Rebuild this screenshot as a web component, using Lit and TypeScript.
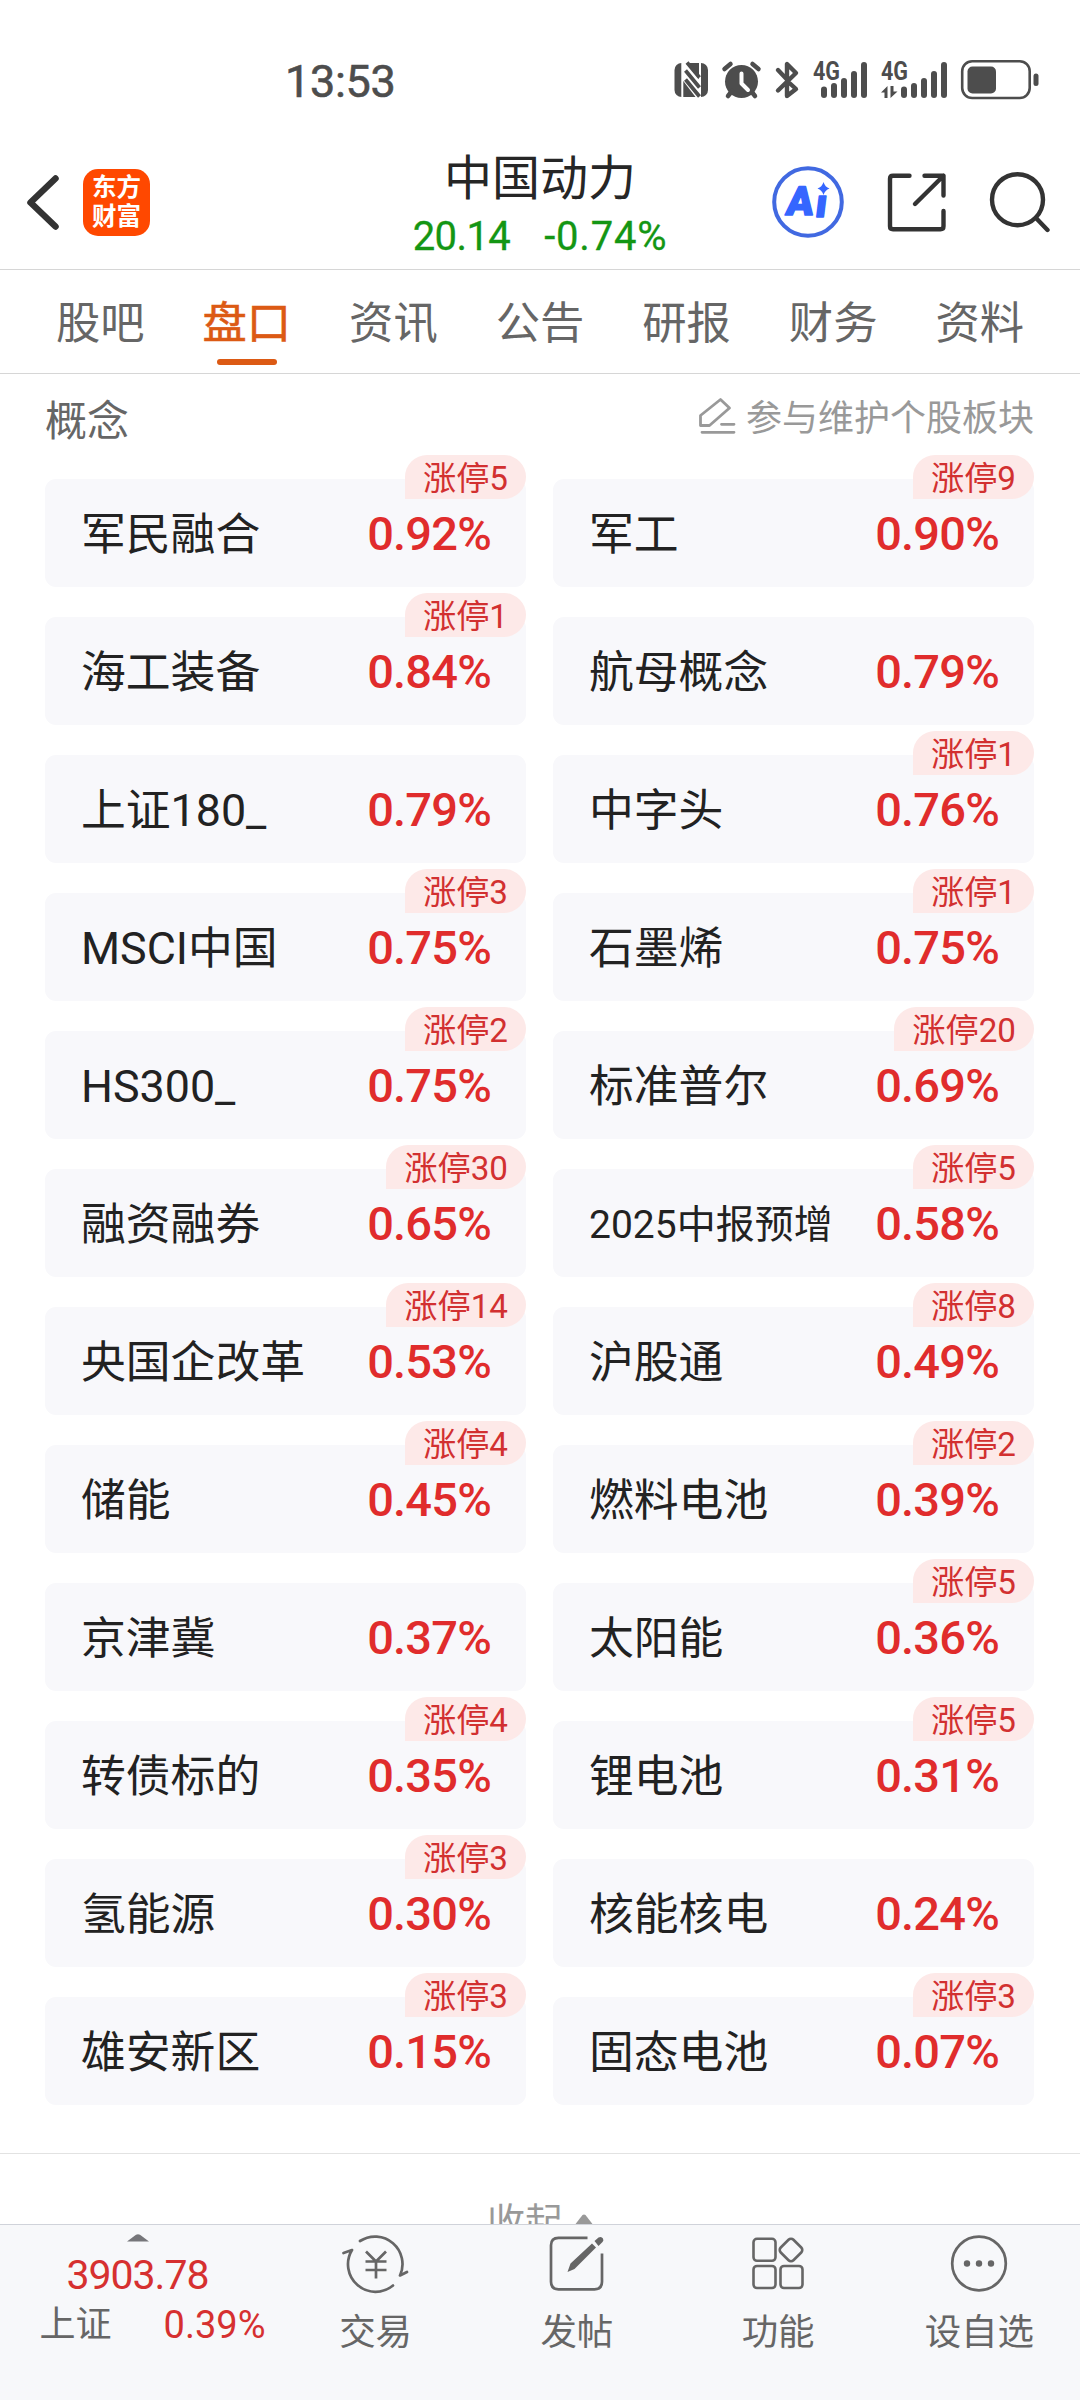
import { LitElement, html, css, svg, nothing } from "lit";
import { customElement, property } from "lit/decorators.js";
import { classMap } from "lit/directives/class-map.js";

interface Concept {
  name: string;
  change: string;
  limitUps?: number;
}

const CONCEPTS: Concept[] = [
  { name: "军民融合", change: "0.92%", limitUps: 5 },
  { name: "军工", change: "0.90%", limitUps: 9 },
  { name: "海工装备", change: "0.84%", limitUps: 1 },
  { name: "航母概念", change: "0.79%" },
  { name: "上证180_", change: "0.79%" },
  { name: "中字头", change: "0.76%", limitUps: 1 },
  { name: "MSCI中国", change: "0.75%", limitUps: 3 },
  { name: "石墨烯", change: "0.75%", limitUps: 1 },
  { name: "HS300_", change: "0.75%", limitUps: 2 },
  { name: "标准普尔", change: "0.69%", limitUps: 20 },
  { name: "融资融券", change: "0.65%", limitUps: 30 },
  { name: "2025中报预增", change: "0.58%", limitUps: 5 },
  { name: "央国企改革", change: "0.53%", limitUps: 14 },
  { name: "沪股通", change: "0.49%", limitUps: 8 },
  { name: "储能", change: "0.45%", limitUps: 4 },
  { name: "燃料电池", change: "0.39%", limitUps: 2 },
  { name: "京津冀", change: "0.37%" },
  { name: "太阳能", change: "0.36%", limitUps: 5 },
  { name: "转债标的", change: "0.35%", limitUps: 4 },
  { name: "锂电池", change: "0.31%", limitUps: 5 },
  { name: "氢能源", change: "0.30%", limitUps: 3 },
  { name: "核能核电", change: "0.24%" },
  { name: "雄安新区", change: "0.15%", limitUps: 3 },
  { name: "固态电池", change: "0.07%", limitUps: 3 },
];

const TABS = ["股吧", "盘口", "资讯", "公告", "研报", "财务", "资料"];

const signalBars = (x: number) =>
  [86.5, 83, 78, 71, 62].map(
    (top, i) => svg`<rect x=${x + i * 10} y=${top} width="6" height=${98 - top} rx="3"/>`
  );

@customElement("status-bar")
class StatusBar extends LitElement {
  static styles = css`
    :host {
      display: flex;
      align-items: center;
      justify-content: space-between;
      height: 48px;
      padding: 56px 36px 32px 285px;
      color: #4d4d4d;
    }
    .time {
      padding-top: 3px;
      font-size: 45px;
      line-height: 48px;
      letter-spacing: -0.3px;
      font-weight: 400;
      -webkit-text-stroke: 0.6px #4d4d4d;
    }
    svg {
      display: block;
    }
    .net {
      font: 700 25px Roboto, sans-serif;
    }
  `;
  render() {
    return html`
      <span class="time">13:53</span>
      <svg width="374" height="48" viewBox="670 56 374 48" fill="#4d4d4d">
        <rect x="674.5" y="63" width="33.5" height="34" rx="7" />
        <path d="M682.300 63v34M700 97V63" stroke="#fff" stroke-width="2" />
        <path d="M682.500 63h4l13 17v17h-4l-13-17z" fill="#fff" />
        <path d="M687 62.500l12.500 15M685.500 70.500l14 17M685.500 79.500l14 17" stroke="#4d4d4d" stroke-width="3.800" />
        <circle cx="741.500" cy="81.500" r="16.500" />
        <path d="M724.500 69l6-5M758.500 69l-6-5M728 96l4-5M755 96l-4-5" stroke="#4d4d4d" stroke-width="4.500" stroke-linecap="round" />
        <path d="M741.500 73.500v10l6.500 6.500" fill="none" stroke="#fff" stroke-width="4" stroke-linecap="round" stroke-linejoin="round" />
        <path d="M778 70l9 9.500M778 90.500l18-17.500-9-9v14M787 85v11l9-7-6-5.500" fill="none" stroke="#4d4d4d" stroke-width="4.400" stroke-linecap="round" stroke-linejoin="round" />
        <text class="net" x="813" y="80" textLength="27" lengthAdjust="spacingAndGlyphs">4G</text>
        ${signalBars(821)}
        <text class="net" x="881" y="80" textLength="27" lengthAdjust="spacingAndGlyphs">4G</text>
        <path d="M881 92.500l6.500-6.500v12h-3v-5.500zM890.500 86h3v5.500h4l-7 6.500z" />
        ${signalBars(901)}
        <rect x="962.200" y="61.200" width="67.500" height="36.800" rx="10" fill="none" stroke="#4d4d4d" stroke-width="2.600" />
        <rect x="967.500" y="66.500" width="28.500" height="27" rx="5" />
        <rect x="1033.500" y="73.500" width="5" height="12.500" rx="2.500" />
      </svg>
    `;
  }
}

@customElement("stock-header")
class StockHeader extends LitElement {
  static styles = css`
    :host {
      display: grid;
      grid-template-columns: 1fr auto 1fr;
      height: 133px;
      border-bottom: 1px solid #d6d6d6;
    }
    svg {
      display: block;
    }
    .left {
      display: flex;
      align-items: center;
      gap: 20px;
      padding: 0 0 1px 23px;
    }
    .logo {
      display: grid;
      place-content: center;
      width: 67px;
      height: 67px;
      border-radius: 15px;
      background: #ff4800;
      color: #fff;
      font-size: 24.5px;
      font-weight: 700;
      line-height: 29px;
      text-align: center;
    }
    .title {
      padding-top: 14px;
      text-align: center;
      color: #262626;
      font-size: 48px;
      line-height: 58px;
    }
    .quote {
      display: flex;
      justify-content: center;
      gap: 34px;
      color: #149614;
      font-size: 40px;
      line-height: 58px;
      letter-spacing: -0.6px;
      -webkit-text-stroke: 0.3px #149614;
    }
    .chg {
      letter-spacing: 0.8px;
    }
    .right {
      display: flex;
      align-items: center;
      justify-content: flex-end;
      gap: 42px;
      padding: 0 29px 1px 0;
    }
    .ai {
      font: 900 40px Roboto, sans-serif;
      fill: #3566ff;
    }
  `;
  render() {
    return html`
      <div class="left">
        <svg width="40" height="60" viewBox="23 172 40 60" fill="none" stroke="#333" stroke-width="6.500" stroke-linecap="round" stroke-linejoin="round">
          <path d="M55.500 178.500L30.500 202.500l25 24" />
        </svg>
        <div class="logo"><span>东方</span><span>财富</span></div>
      </div>
      <div class="title">
        中国动力
        <div class="quote"><span>20.14</span><span class="chg">-0.74%</span></div>
      </div>
      <div class="right">
        <svg width="74" height="74" viewBox="771.500 165 74 74">
          <circle cx="808.500" cy="202" r="33.800" fill="none" stroke="#4169e1" stroke-width="4" />
          <g transform="translate(0 216) skewX(-7)" stroke="#3566ff" stroke-width="1.500" stroke-linejoin="round">
            <text class="ai" x="785.500" y="-1">A</text>
            <text class="ai" x="815" y="1">ı</text>
          </g>
          <path d="M824 182q1.500 5 6 6.500-4.500 1.500-6 6.500-1.500-5-6-6.500 4.500-1.500 6-6.500z" fill="#3566ff" />
        </svg>
        <svg width="60" height="60" viewBox="887 172 60 60" fill="none" stroke="#333" stroke-width="4.400" stroke-linecap="round" stroke-linejoin="round">
          <path d="M909.500 175.800H893q-3 0-3 3v47.400q0 3 3 3h47.500q3 0 3-3V211M924.500 175.800h19V195.500M943.500 175.800L915 204" />
        </svg>
        <svg width="62" height="62" viewBox="990 171 62 62" fill="none" stroke="#333" stroke-width="4.400" stroke-linecap="round">
          <circle cx="1018.500" cy="199.700" r="25.500" />
          <path d="M1037 218l11.500 12" />
        </svg>
      </div>
    `;
  }
}

@customElement("tab-bar")
class TabBar extends LitElement {
  static styles = css`
    :host {
      display: grid;
      grid-template-columns: repeat(7, 1fr);
      height: 103px;
      padding: 0 27px;
      border-bottom: 1px solid #d6d6d6;
      color: #666;
      font-size: 44.3px;
      text-align: center;
    }
    .tab {
      display: flex;
      flex-direction: column;
      align-items: center;
      line-height: 60px;
      padding-top: 24px;
      gap: 5px;
    }
    .active {
      color: #dc5a14;
      -webkit-text-stroke: 0.6px #dc5a14;
    }
    .active::after {
      content: "";
      width: 60px;
      height: 6px;
      border-radius: 3px;
      background: #dc5a14;
    }
  `;
  render() {
    return TABS.map(
      (t) => html`<div class=${classMap({ tab: true, active: t === "盘口" })}>${t}</div>`
    );
  }
}

@customElement("concept-card")
class ConceptCard extends LitElement {
  @property({ attribute: false }) concept!: Concept;
  static styles = css`
    :host {
      position: relative;
      display: flex;
      align-items: center;
      justify-content: space-between;
      height: 108px;
      padding: 0 35px 0 36px;
      box-sizing: border-box;
      border-radius: 11px;
      background: #f8f8fb;
      white-space: nowrap;
    }
    .name {
      padding-top: 3px;
      color: #222;
      font-size: 44.8px;
      line-height: 60px;
    }
    .long {
      font-size: 39px;
    }
    .change {
      color: #e02c2c;
      font-size: 47px;
      font-weight: 500;
      letter-spacing: -0.8px;
    }
    .badge {
      position: absolute;
      top: -24px;
      right: 0;
      height: 44px;
      padding: 1px 18px 0;
      box-sizing: border-box;
      border-radius: 22px 22px 22px 0;
      background: #fde9e8;
      color: #d23030;
      font-size: 33.2px;
      line-height: 45px;
    }
  `;
  render() {
    const { name, change, limitUps } = this.concept;
    return html`
      <span class=${classMap({ name: true, long: name.length > 7 })}>${name}</span>
      <span class="change">${change}</span>
      ${limitUps ? html`<span class="badge">涨停${limitUps}</span>` : nothing}
    `;
  }
}

@customElement("bottom-bar")
class BottomBar extends LitElement {
  static styles = css`
    :host {
      display: grid;
      grid-template-columns: 275px repeat(4, 1fr);
      height: 176px;
      box-sizing: border-box;
      border-top: 1px solid #d0d3da;
      background: #f7f8fa;
      color: #666;
      font-size: 36.5px;
    }
    svg {
      display: block;
    }
    .index {
      display: flex;
      flex-direction: column;
      align-items: center;
      padding-top: 9px;
    }
    .value {
      margin-top: 9px;
      color: #d63030;
      font-size: 41px;
      line-height: 48px;
      letter-spacing: -1px;
    }
    .row {
      display: flex;
      align-items: center;
      gap: 52px;
      padding: 2px 0 0 30px;
      line-height: 48px;
      font-size: 36px;
    }
    .pct {
      color: #d63030;
      font-size: 38px;
    }
    .item {
      display: flex;
      flex-direction: column;
      align-items: center;
      padding-top: 7px;
      line-height: 50px;
      gap: 14px;
    }
  `;
  render() {
    return html`
      <div class="index">
        <svg width="22" height="8" viewBox="0 0 22 8"><path d="M0 7.500L9 .8q2-1.200 4 0l9 6.700z" fill="#76767a" /></svg>
        <div class="value">3903.78</div>
        <div class="row"><span>上证</span><span class="pct">0.39%</span></div>
      </div>
      <div class="item">
        <svg width="68" height="62" viewBox="342 2232.500 68 62" fill="none" stroke="#666" stroke-width="2.700" stroke-linecap="round" stroke-linejoin="round">
          <path d="M360 2241.500a27.500 27.500 0 0 1 40 34.500l7-3.500M393 2286a27.500 27.500 0 0 1-41-35.500l-8.500 3" />
          <path d="M366 2252l10 10 10-10M376 2262v17M365.500 2262h21M365.500 2270.500h21" stroke-linecap="butt" />
        </svg>
        交易
      </div>
      <div class="item">
        <svg width="62" height="62" viewBox="546.500 2232.500 62 62" fill="none" stroke="#666" stroke-width="2.700">
          <path d="M588 2238.300H559q-7.500 0-7.500 7.500v36.500q0 7.500 7.500 7.500h36q7.500 0 7.500-7.500V2254" />
          <path d="M568 2272.500l3-8.500 21.500-20 4 4-21.500 21.500zM595 2241.500l4-3.500q3-1.500 4.500 1 1 2-.5 3.500l-4 4z" fill="#666" stroke="none" />
        </svg>
        发帖
      </div>
      <div class="item">
        <svg width="62" height="62" viewBox="747.500 2232.500 62 62" fill="none" stroke="#666" stroke-width="2.600">
          <rect x="754" y="2239.300" width="22" height="22" rx="3.500" />
          <rect x="754" y="2266.500" width="22" height="22" rx="3.500" />
          <rect x="781" y="2266.500" width="22" height="22" rx="3.500" />
          <rect x="782.500" y="2241.500" width="18" height="18" rx="3.500" transform="rotate(45 791.500 2250.500)" />
        </svg>
        功能
      </div>
      <div class="item">
        <svg width="62" height="62" viewBox="948 2232.500 62 62">
          <circle cx="979" cy="2264" r="26.800" fill="none" stroke="#666" stroke-width="2.700" />
          <g fill="#666"><circle cx="967" cy="2264" r="3.200" /><circle cx="979" cy="2264" r="3.200" /><circle cx="991" cy="2264" r="3.200" /></g>
        </svg>
        设自选
      </div>
    `;
  }
}

@customElement("app-root")
class AppRoot extends LitElement {
  static styles = css`
    :host {
      display: flex;
      flex-direction: column;
      width: 1080px;
      height: 2400px;
      overflow: hidden;
      background: #fff;
      font-family: Roboto, "Noto Sans CJK SC", sans-serif;
    }
    .content {
      flex: 1;
      min-height: 0;
      overflow: hidden;
    }
    .section {
      display: flex;
      justify-content: space-between;
      height: 105px;
      padding: 0 46px 0 45px;
      box-sizing: border-box;
    }
    .heading {
      padding-top: 18px;
      color: #666;
      font-size: 42px;
      line-height: 60px;
    }
    .maintain {
      display: flex;
      align-items: flex-start;
      gap: 10px;
      padding-top: 15px;
      color: #999;
      font-size: 36px;
      line-height: 60px;
    }
    .edit {
      margin-top: 7px;
    }
    .grid {
      display: grid;
      grid-template-columns: 1fr 1fr;
      gap: 30px 27px;
      padding: 0 46px 48px 45px;
    }
    .collapse {
      display: flex;
      justify-content: center;
      gap: 11px;
      padding: 41px 0 0 1px;
      border-top: 1px solid #e2e2e2;
      color: #999;
      font-size: 38px;
      line-height: 54px;
    }
    .arrow {
      margin-top: 19px;
    }
  `;
  render() {
    return html`
      <status-bar></status-bar>
      <stock-header></stock-header>
      <tab-bar></tab-bar>
      <div class="content">
        <div class="section">
          <span class="heading">概念</span>
          <span class="maintain">
            <svg class="edit" width="38" height="40" viewBox="698 396 38 40" fill="none" stroke="#999" stroke-width="2.800" stroke-linecap="round" stroke-linejoin="round">
              <path d="M700.500 415.500L720.500 399.500l9 8.500-20 17.500h-9zM721.500 424.300h12.500M702 432.300h32" />
            </svg>
            参与维护个股板块
          </span>
        </div>
        <div class="grid">
          ${CONCEPTS.map((c) => html`<concept-card .concept=${c}></concept-card>`)}
        </div>
        <div class="collapse">
          <span>收起</span>
          <svg class="arrow" width="20" height="12" viewBox="0 0 20 12"><path d="M0 12L8.500 1q1.500-1.200 3 0L20 12z" fill="#999" /></svg>
        </div>
      </div>
      <bottom-bar></bottom-bar>
    `;
  }
}
